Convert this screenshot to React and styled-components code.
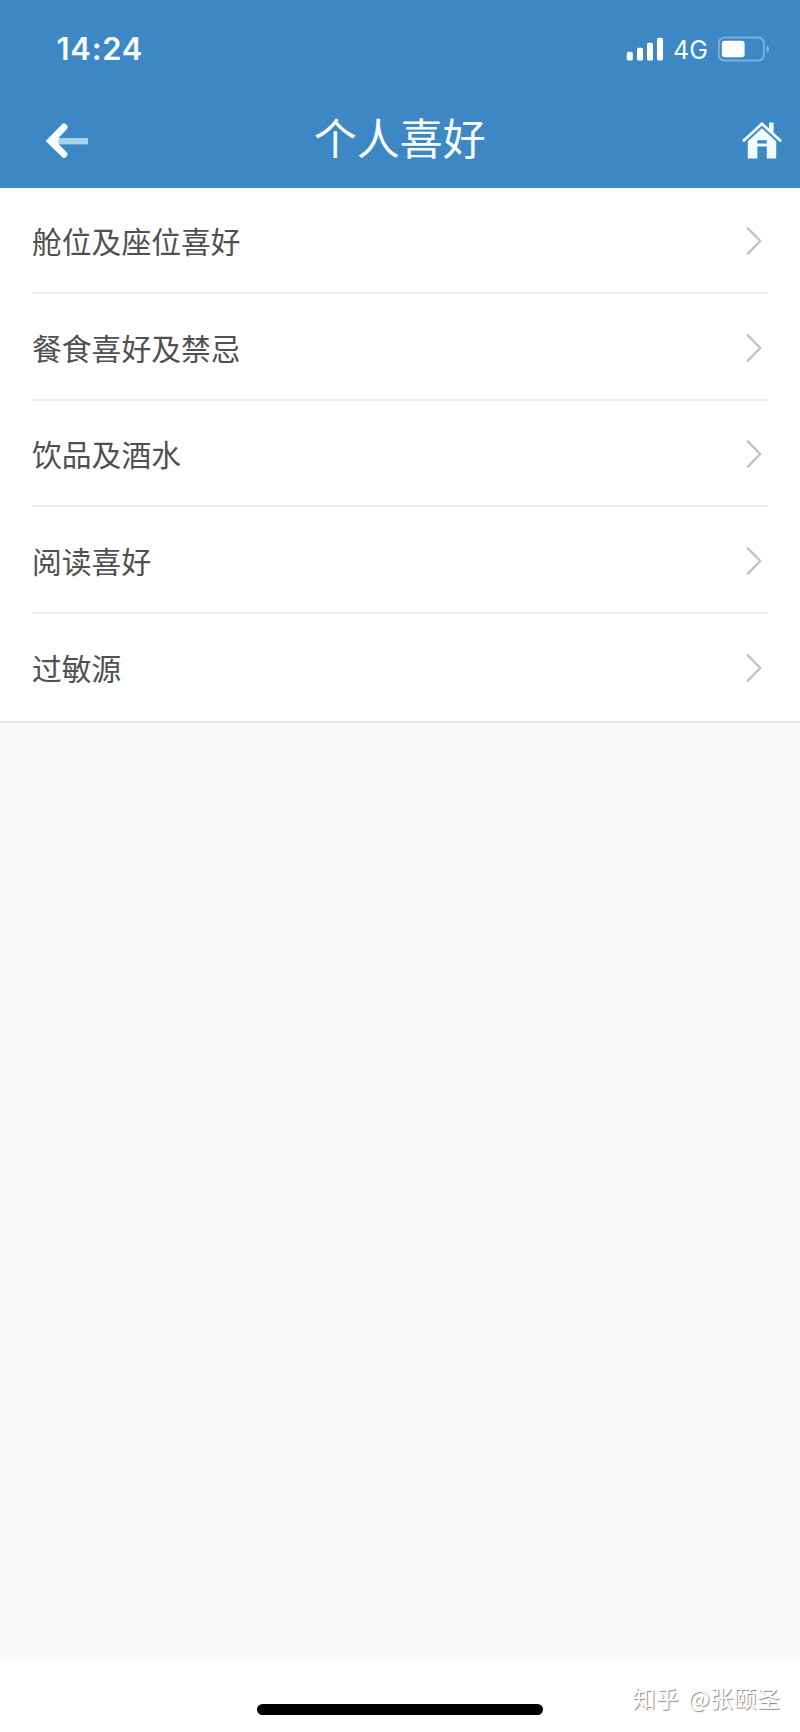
import styled, { createGlobalStyle } from "styled-components";

const menus = [
    { id: 1, title: "舱位及座位喜好" },
    { id: 2, title: "餐食喜好及禁忌" },
    { id: 3, title: "饮品及酒水" },
    { id: 4, title: "阅读喜好" },
    { id: 5, title: "过敏源" },
];

const SignalIcon = () => (
    <svg width="38" height="26" viewBox="0 0 38 26" fill="#fff">
        <rect x="0.8" y="15.8" width="6" height="8.8" rx="1.6" />
        <rect x="11" y="11.8" width="6" height="12.8" rx="1.6" />
        <rect x="21" y="6.8" width="6" height="17.8" rx="1.6" />
        <rect x="31" y="1.8" width="6" height="22.8" rx="1.6" />
    </svg>
);

const BatteryIcon = () => (
    <svg width="52" height="26" viewBox="0 0 52 26">
        <rect x="0.8" y="1.6" width="45" height="23" rx="5.5" fill="none" stroke="#73b2e3" strokeWidth="2" />
        <rect x="3.8" y="4.8" width="22.8" height="16.4" rx="3" fill="#fff" />
        <path d="M48.4 9 Q51.2 10.4 51.2 13.1 Q51.2 15.8 48.4 17.2 Z" fill="#73b2e3" />
    </svg>
);

const BackIcon = () => (
    <svg width="44" height="38" viewBox="0 0 44 38">
        <path d="M13 16 H43 V22.4 H13 Z" fill="#a6d0ec" />
        <path d="M0.6 19 L17.6 1.8 Q19 0.8 20.6 2 L22.2 3.8 Q23.4 5.4 22 7 L14 15.6 Q12.6 19 14 22.4 L22 30.4 Q23.4 32 22.2 33.6 L20.6 35.4 Q19 36.6 17.6 35.4 Z" fill="#f4fdff" />
    </svg>
);

const HomeIcon = () => (
    <svg width="42" height="38" viewBox="0 0 42 38">
        <path d="M28 0.6 H32.6 V11.2 L28 6.7 Z" fill="#effcff" />
        <path d="M2 19.2 L21 1.8 L40 19.2" fill="none" stroke="#effcff" strokeWidth="2.8" />
        <path
            d="M21 6.2 L35.2 19.2 V36.4 H25.8 V24.6 H16.4 V36.4 H6.8 V19.2 Z M16.4 18.2 V21.4 H25.8 V18.2 Z"
            fill="#effcff"
            fillRule="evenodd"
        />
    </svg>
);

const ArrowIcon = () => (
    <svg width="16" height="30" viewBox="0 0 16 30">
        <path d="M1.2 1.6 L14.2 15 L1.2 28.4" fill="none" stroke="#c2c2c2" strokeWidth="2.3" />
    </svg>
);

const App = () => {
    return (
        <>
            <GlobalStyle />
            <StWrapper>
                <StHeader>
                    <StStatusBar>
                        <StTime>14:24</StTime>
                        <StStatusIcons>
                            <SignalIcon />
                            <StNetwork>4G</StNetwork>
                            <BatteryIcon />
                        </StStatusIcons>
                    </StStatusBar>
                    <StNavBar>
                        <StNavButton aria-label="返回">
                            <BackIcon />
                        </StNavButton>
                        <StTitle>个人喜好</StTitle>
                        <StNavButton $right aria-label="首页">
                            <HomeIcon />
                        </StNavButton>
                    </StNavBar>
                </StHeader>
                <StList>
                    {menus.map((item) => (
                        <StItem key={item.id}>
                            <StItemTitle>{item.title}</StItemTitle>
                            <ArrowIcon />
                        </StItem>
                    ))}
                </StList>
                <StContent />
                <StFooter>
                    <StHomeBar />
                    <StWatermark>知乎 @张颐圣</StWatermark>
                </StFooter>
            </StWrapper>
        </>
    );
};

export default App;

const GlobalStyle = createGlobalStyle`
    * {
        box-sizing: border-box;
    }

    body {
        margin: 0;
        font-family: "Noto Sans CJK SC", sans-serif;
    }
`;

const StWrapper = styled.div`
    display: flex;
    flex-direction: column;
    width: 800px;
    height: 1732px;
    background-color: #f9f9f9;
`;

const StHeader = styled.header`
    height: 187.5px;
    background-color: #3c87c4;
    color: #f6fdff;
`;

const StStatusBar = styled.div`
    display: flex;
    justify-content: space-between;
    align-items: center;
    height: 98px;
    padding: 0 30px 0 56.5px;
`;

const StTime = styled.span`
    font-family: Inter, sans-serif;
    font-size: 31px;
    font-weight: 600;
    line-height: 40px;
    letter-spacing: 0.7px;
`;

const StStatusIcons = styled.div`
    display: flex;
    align-items: center;
`;

const StNetwork = styled.span`
    width: 35px;
    margin: 2px 10px 0 9px;
    font-family: Inter, sans-serif;
    font-size: 25px;
    line-height: 30px;
`;

const StNavBar = styled.div`
    display: grid;
    grid-template-columns: 1fr auto 1fr;
    align-items: center;
    height: 86px;
    padding: 0 17px 0 44.5px;
`;

const StNavButton = styled.button`
    display: flex;
    justify-self: ${({ $right }) => ($right ? "end" : "start")};
    padding: 0;
    border: none;
    background: none;
    cursor: pointer;
`;

const StTitle = styled.h1`
    margin: 0 0 11px -28px;
    font-size: 43px;
    font-weight: 400;
    line-height: 60px;
`;

const StList = styled.ul`
    height: 535.5px;
    margin: 0;
    padding: 0 32px;
    border-bottom: 2px solid #e6e6e6;
    background-color: #fff;
    list-style: none;
`;

const StItem = styled.li`
    display: flex;
    justify-content: space-between;
    align-items: center;
    height: 106.6px;
    padding: 3px 6px 0 0;
    border-bottom: 2px solid #ececec;
    cursor: pointer;

    &:last-child {
        border-bottom-color: transparent;
    }
`;

const StItemTitle = styled.span`
    margin-bottom: 2px;
    font-size: 29.8px;
    line-height: 44px;
    color: #505050;
`;

const StContent = styled.main`
    flex: 1;
`;

const StFooter = styled.footer`
    position: relative;
    height: 73px;
    padding-top: 45px;
    background-color: #fff;
`;

const StHomeBar = styled.div`
    width: 286px;
    height: 11px;
    margin: 0 auto;
    border-radius: 6px;
    background-color: #000;
`;

const StWatermark = styled.span`
    position: absolute;
    right: 20px;
    bottom: 18px;
    font-size: 23px;
    line-height: 34px;
    letter-spacing: 0.3px;
    word-spacing: 3.6px;
    color: #fff;
    text-shadow: 1px 1px 1px #888;
`;
